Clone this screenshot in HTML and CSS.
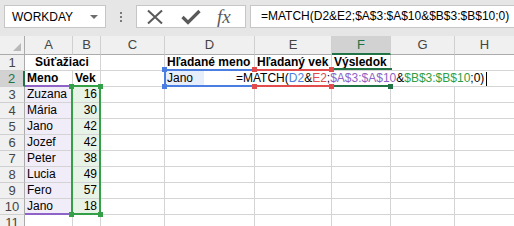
FILE: index.html
```html
<!DOCTYPE html>
<html>
<head>
<meta charset="utf-8">
<link rel="stylesheet" href="styles.css">
</head>
<body>
<div class="toolbar">
  <div class="namebox"><span>WORKDAY</span><span class="caret"></span></div>
  <div class="grip"><i></i><i></i><i></i></div>
  <div class="fxbtns">
    <svg class="ico-x" width="18" height="16" viewBox="0 0 18 16"><path d="M2 1.5 L16 14.5 M16 1.5 L2 14.5" stroke="#5a5a5a" stroke-width="2" fill="none"/></svg>
    <svg class="ico-ok" width="20" height="16" viewBox="0 0 20 16"><path d="M1.5 8 L7 13.5 L18.5 2" stroke="#5a5a5a" stroke-width="3.2" fill="none"/></svg>
    <span class="fx">fx</span>
  </div>
  <div class="formula">=MATCH(D2&amp;E2;$A$3:$A$10&amp;$B$3:$B$10;0)</div>
</div>
<div class="sheet">
  <div class="corner"><span class="tri"></span></div>
  <div class="ch">A</div><div class="ch">B</div><div class="ch">C</div><div class="ch">D</div><div class="ch">E</div><div class="ch sel">F</div><div class="ch">G</div><div class="ch">H</div>

  <div class="rh">1</div>
  <div class="c b ctr span2">Súťažiaci</div><div class="c"></div><div class="c b">Hľadané meno</div><div class="c b">Hľadaný vek</div><div class="c b">Výsledok</div><div class="c"></div><div class="c"></div>

  <div class="rh sel">2</div>
  <div class="c b">Meno</div><div class="c b">Vek</div><div class="c"></div><div class="c blu">Jano</div><div class="c"></div><div class="c"></div><div class="c"></div><div class="c"></div>

  <div class="rh">3</div>
  <div class="c pur">Zuzana</div><div class="c grn num">16</div><div class="c"></div><div class="c"></div><div class="c"></div><div class="c"></div><div class="c"></div><div class="c"></div>
  <div class="rh">4</div>
  <div class="c pur">Mária</div><div class="c grn num">30</div><div class="c"></div><div class="c"></div><div class="c"></div><div class="c"></div><div class="c"></div><div class="c"></div>
  <div class="rh">5</div>
  <div class="c pur">Jano</div><div class="c grn num">42</div><div class="c"></div><div class="c"></div><div class="c"></div><div class="c"></div><div class="c"></div><div class="c"></div>
  <div class="rh">6</div>
  <div class="c pur">Jozef</div><div class="c grn num">42</div><div class="c"></div><div class="c"></div><div class="c"></div><div class="c"></div><div class="c"></div><div class="c"></div>
  <div class="rh">7</div>
  <div class="c pur">Peter</div><div class="c grn num">38</div><div class="c"></div><div class="c"></div><div class="c"></div><div class="c"></div><div class="c"></div><div class="c"></div>
  <div class="rh">8</div>
  <div class="c pur">Lucia</div><div class="c grn num">49</div><div class="c"></div><div class="c"></div><div class="c"></div><div class="c"></div><div class="c"></div><div class="c"></div>
  <div class="rh">9</div>
  <div class="c pur">Fero</div><div class="c grn num">57</div><div class="c"></div><div class="c"></div><div class="c"></div><div class="c"></div><div class="c"></div><div class="c"></div>
  <div class="rh">10</div>
  <div class="c pur">Jano</div><div class="c grn num">18</div><div class="c"></div><div class="c"></div><div class="c"></div><div class="c"></div><div class="c"></div><div class="c"></div>
  <div class="rh">11</div>
  <div class="c"></div><div class="c"></div><div class="c"></div><div class="c"></div><div class="c"></div><div class="c"></div><div class="c"></div><div class="c"></div>

  <!-- overlays -->
  <div class="editbox"><span>=MATCH(</span><span class="t-blue">D2</span><span>&amp;</span><span class="t-red">E2</span><span>;</span><span class="t-pur">$A$3:$A$10</span><span>&amp;</span><span class="t-grn">$B$3:$B$10</span><span>;0)</span><span class="cursor"></span></div>

  <div class="rng-pur rng-pur-top"></div>
  <div class="rng-pur rng-pur-bot"></div>
  <div class="rng-grn"></div>
  <div class="h h-grn h-g1"></div><div class="h h-grn h-g2"></div><div class="h h-grn h-g3"></div><div class="h h-grn h-g4"></div>

  <div class="rng-blue"></div>
  <div class="h h-blue h-b1"></div><div class="h h-blue h-b2"></div>

  <div class="active"></div>
  <div class="fillhandle"></div>

  <div class="rng-red"></div>
  <div class="h h-red h-r1"></div><div class="h h-red h-r2"></div><div class="h h-red h-r3"></div><div class="h h-red h-r4"></div>
</div>
</body>
</html>
```
FILE: styles.css
```css
html, body {
  margin: 0;
  padding: 0;
}
body {
  width: 514px;
  height: 226px;
  overflow: hidden;
  background: #fff;
  font-family: "Liberation Sans", Arial, sans-serif;
  color: #000;
}

/* ---------- toolbar / formula bar ---------- */
.toolbar {
  height: 36px;
  box-sizing: border-box;
  background: #e6e6e6;
  display: flex;
  align-items: flex-start;
  padding: 5px 0 0 4px;
}
.namebox {
  flex: 0 0 102px;
  width: 102px;
  height: 23px;
  box-sizing: border-box;
  border: 1px solid #c6c6c6;
  background: #fff;
  display: flex;
  align-items: center;
  justify-content: space-between;
  padding: 0 7px 0 7px;
  font-size: 12px;
}
.caret {
  width: 0;
  height: 0;
  border-left: 4px solid transparent;
  border-right: 4px solid transparent;
  border-top: 4px solid #6d6d6d;
}
.grip {
  flex: 0 0 2px;
  margin-left: 14px;
  width: 2px;
  display: flex;
  flex-direction: column;
  gap: 2px;
  padding-top: 7px;
}
.grip i {
  display: block;
  width: 2px;
  height: 2px;
  background: #7a7a7a;
}
.fxbtns {
  flex: 0 0 110px;
  margin-left: 14px;
  width: 110px;
  height: 23px;
  box-sizing: border-box;
  border: 1px solid #c6c6c6;
  background: #fff;
  display: flex;
  align-items: center;
  padding-left: 9px;
}
.ico-x, .ico-ok {
  flex: 0 0 auto;
}
.ico-ok {
  margin-left: 17px;
}
.fx {
  margin-left: 16px;
  font-family: "Liberation Serif", "Times New Roman", serif;
  font-style: italic;
  font-size: 19px;
  color: #5a5a5a;
  line-height: 18px;
}
.formula {
  margin-left: 4px;
  flex: 1 1 auto;
  min-width: 0;
  overflow: hidden;
  height: 23px;
  box-sizing: border-box;
  border: 1px solid #c6c6c6;
  border-right: none;
  background: #fff;
  padding-left: 10px;
  font-size: 12px;
  line-height: 21px;
  white-space: nowrap;
}

/* ---------- sheet grid ---------- */
.sheet {
  position: relative;
  display: grid;
  grid-template-columns: 25px 48px 28px 64px 90px 77px 59px 64px 60px;
  grid-template-rows: 19px repeat(11, 16px);
  font-size: 12px;
}
.corner, .ch, .rh, .c {
  box-sizing: border-box;
  white-space: nowrap;
}
.corner {
  background: #f0f0f0;
  border-right: 1px solid #ababab;
  border-bottom: 1px solid #ababab;
  display: flex;
  justify-content: flex-end;
  align-items: flex-end;
  padding: 0 3px 3px 0;
}
.tri {
  width: 0;
  height: 0;
  border-left: 8px solid transparent;
  border-bottom: 8px solid #b9b9b9;
}
.ch {
  background: #f0f0f0;
  color: #444;
  font-size: 13px;
  text-align: center;
  line-height: 18px;
  border-right: 1px solid #d0d0d0;
  border-bottom: 1px solid #ababab;
}
.ch.sel {
  background: #d2d2d2;
  color: #217346;
  border-bottom: 2px solid #217346;
}
.rh {
  background: #f0f0f0;
  color: #444;
  font-size: 13px;
  text-align: center;
  line-height: 15px;
  border-right: 1px solid #ababab;
  border-bottom: 1px solid #d0d0d0;
}
.rh.sel {
  background: #d2d2d2;
  color: #217346;
  border-right: 2px solid #217346;
}
.c {
  border-right: 1px solid #d4d4d4;
  border-bottom: 1px solid #d4d4d4;
  padding: 0 3px 0 2px;
  line-height: 15px;
}
.b { font-weight: bold; }
.ctr { text-align: center; }
.span2 { grid-column: span 2; }
.num { text-align: right; }
.pur { background: #f0ecf8; }
.grn { background: #e8f3e8; }
.blu { background: #e6edfb; }

/* ---------- overlays ---------- */
.editbox {
  position: absolute;
  left: 204px;
  top: 35px;
  width: 310px;
  height: 15px;
  background: #fff;
  box-sizing: border-box;
  padding-left: 32px;
  line-height: 15px;
  white-space: nowrap;
  display: flex;
  align-items: center;
}
.t-blue { color: #4a7ee0; }
.t-red { color: #e24c4c; }
.t-pur { color: #8e62c6; }
.t-grn { color: #2f9e44; }
.cursor {
  display: inline-block;
  width: 1px;
  height: 14px;
  background: #000;
  margin-left: 2px;
}

.rng-pur {
  position: absolute;
  left: 25px;
  width: 46px;
  height: 2px;
  background: #8e62c6;
}
.rng-pur-top { top: 49px; }
.rng-pur-bot { top: 177px; }

.rng-grn {
  position: absolute;
  left: 71px;
  top: 49px;
  width: 30px;
  height: 130px;
  box-sizing: border-box;
  border: 2px solid #33a047;
}
.h {
  position: absolute;
  width: 5px;
  height: 5px;
}
.h-grn { background: #33a047; }
.h-g1 { left: 69px; top: 48px; }
.h-g2 { left: 98px; top: 48px; }
.h-g3 { left: 69px; top: 176px; }
.h-g4 { left: 98px; top: 176px; }

.rng-blue {
  position: absolute;
  left: 164px;
  top: 33px;
  width: 92px;
  height: 18px;
  box-sizing: border-box;
  border: 2px solid #4a7ee0;
  border-right: none;
}
.h-blue { background: #4a7ee0; }
.h-b1 { left: 162px; top: 31px; }
.h-b2 { left: 162px; top: 48px; }

.active {
  position: absolute;
  left: 331px;
  top: 32px;
  width: 61px;
  height: 19px;
  box-sizing: border-box;
  border-top: 2px solid #217346;
  border-bottom: 2px solid #217346;
}
.fillhandle {
  position: absolute;
  left: 388px;
  top: 48px;
  width: 5px;
  height: 5px;
  background: #217346;
}

.rng-red {
  position: absolute;
  left: 254px;
  top: 33px;
  width: 78px;
  height: 18px;
  box-sizing: border-box;
  border-top: 2px solid #e24c4c;
  border-bottom: 2px solid #e24c4c;
}
.h-red { background: #e24c4c; }
.h-r1 { left: 252px; top: 31px; }
.h-r2 { left: 252px; top: 48px; }
.h-r3 { left: 329px; top: 31px; }
.h-r4 { left: 329px; top: 48px; }
```
